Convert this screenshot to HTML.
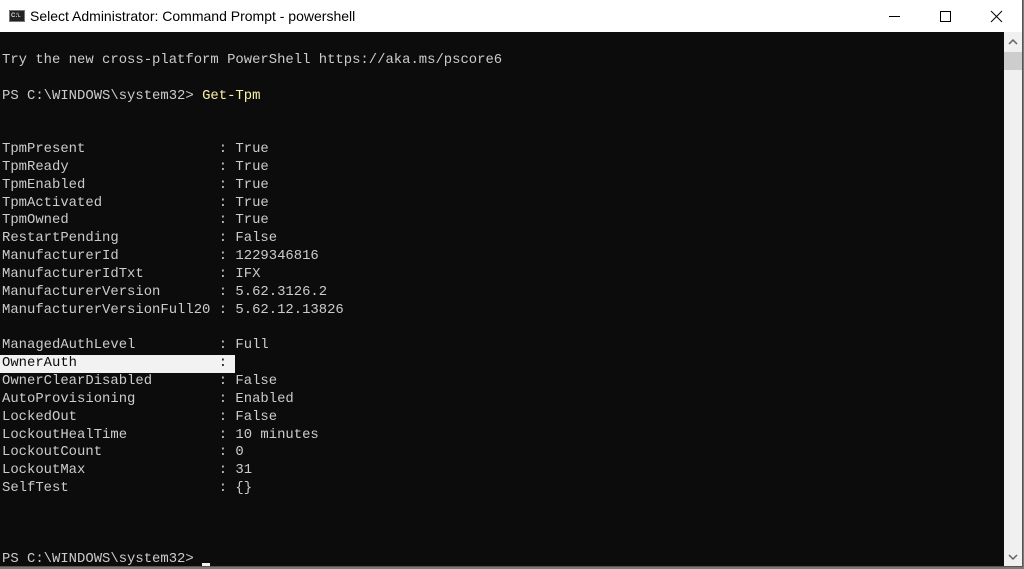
<!DOCTYPE html>
<html><head><meta charset="utf-8"><style>
*{margin:0;padding:0;box-sizing:border-box}
body{width:1024px;height:568px;background:#7a7a7a;position:relative;overflow:hidden;font-family:"Liberation Sans",sans-serif}
#win{position:absolute;left:0;top:0;width:1023px;height:567px;background:#0c0c0c;border-right:1px solid #555;border-bottom:1px solid #555}
#title{position:absolute;left:0;top:0;width:1022px;height:32px;background:#fff}
#title .t{position:absolute;left:30px;top:8px;font-size:14px;color:#000}
#icon{position:absolute;left:9px;top:10px;width:16px;height:12px;background:#222;border:1px solid #777}
#icon span{position:absolute;left:1px;top:1px;font:bold 6px "Liberation Sans",sans-serif;color:#ddd;line-height:8px}
#con{position:absolute;left:2px;top:34px;width:1000px;font-family:"Liberation Mono",monospace;font-size:13.9px;line-height:17.84px;color:#cccccc;white-space:pre}
.y{color:#f9f1a5}
.hl{background:#f2f2f2;color:#0c0c0c;display:inline-block;width:235px;margin-left:-2px;padding-left:2px}
#sb{position:absolute;left:1004px;top:32px;width:18px;height:534px;background:#f0f0f0}
#thumb{position:absolute;left:1004px;top:52px;width:18px;height:18px;background:#cdcdcd}
#cur{position:absolute;left:202px;top:563px;width:8px;height:3px;background:#f2f2f2}
</style></head><body>
<div id="win">
<div id="title"><div id="icon"><span>C:\.</span></div><div class="t">Select Administrator: Command Prompt - powershell</div>
<svg style="position:absolute;left:880px;top:10px" width="140" height="14">
<line x1="9" y1="6.5" x2="20" y2="6.5" stroke="#000" stroke-width="1"/>
<rect x="60.5" y="1.5" width="10" height="10" fill="none" stroke="#000"/>
<line x1="111" y1="1" x2="122" y2="12" stroke="#000"/><line x1="122" y1="1" x2="111" y2="12" stroke="#000"/>
</svg></div>
<div id="con">
Try the new cross-platform PowerShell https://aka.ms/pscore6

PS C:\WINDOWS\system32&gt; <span class="y">Get-Tpm</span>


TpmPresent                : True
TpmReady                  : True
TpmEnabled                : True
TpmActivated              : True
TpmOwned                  : True
RestartPending            : False
ManufacturerId            : 1229346816
ManufacturerIdTxt         : IFX
ManufacturerVersion       : 5.62.3126.2
ManufacturerVersionFull20 : 5.62.12.13826

ManagedAuthLevel          : Full
<span class="hl">OwnerAuth                 : </span>
OwnerClearDisabled        : False
AutoProvisioning          : Enabled
LockedOut                 : False
LockoutHealTime           : 10 minutes
LockoutCount              : 0
LockoutMax                : 31
SelfTest                  : {}



PS C:\WINDOWS\system32&gt;</div>
<div id="sb"></div><div id="thumb"></div>
<svg style="position:absolute;left:1004px;top:36px" width="18" height="12"><polyline points="5,8 9,4 13,8" fill="none" stroke="#606060" stroke-width="1.5"/></svg>
<svg style="position:absolute;left:1004px;top:551px" width="18" height="12"><polyline points="5,4 9,8 13,4" fill="none" stroke="#606060" stroke-width="1.5"/></svg>
<div id="cur"></div>
</div>
</body></html>
